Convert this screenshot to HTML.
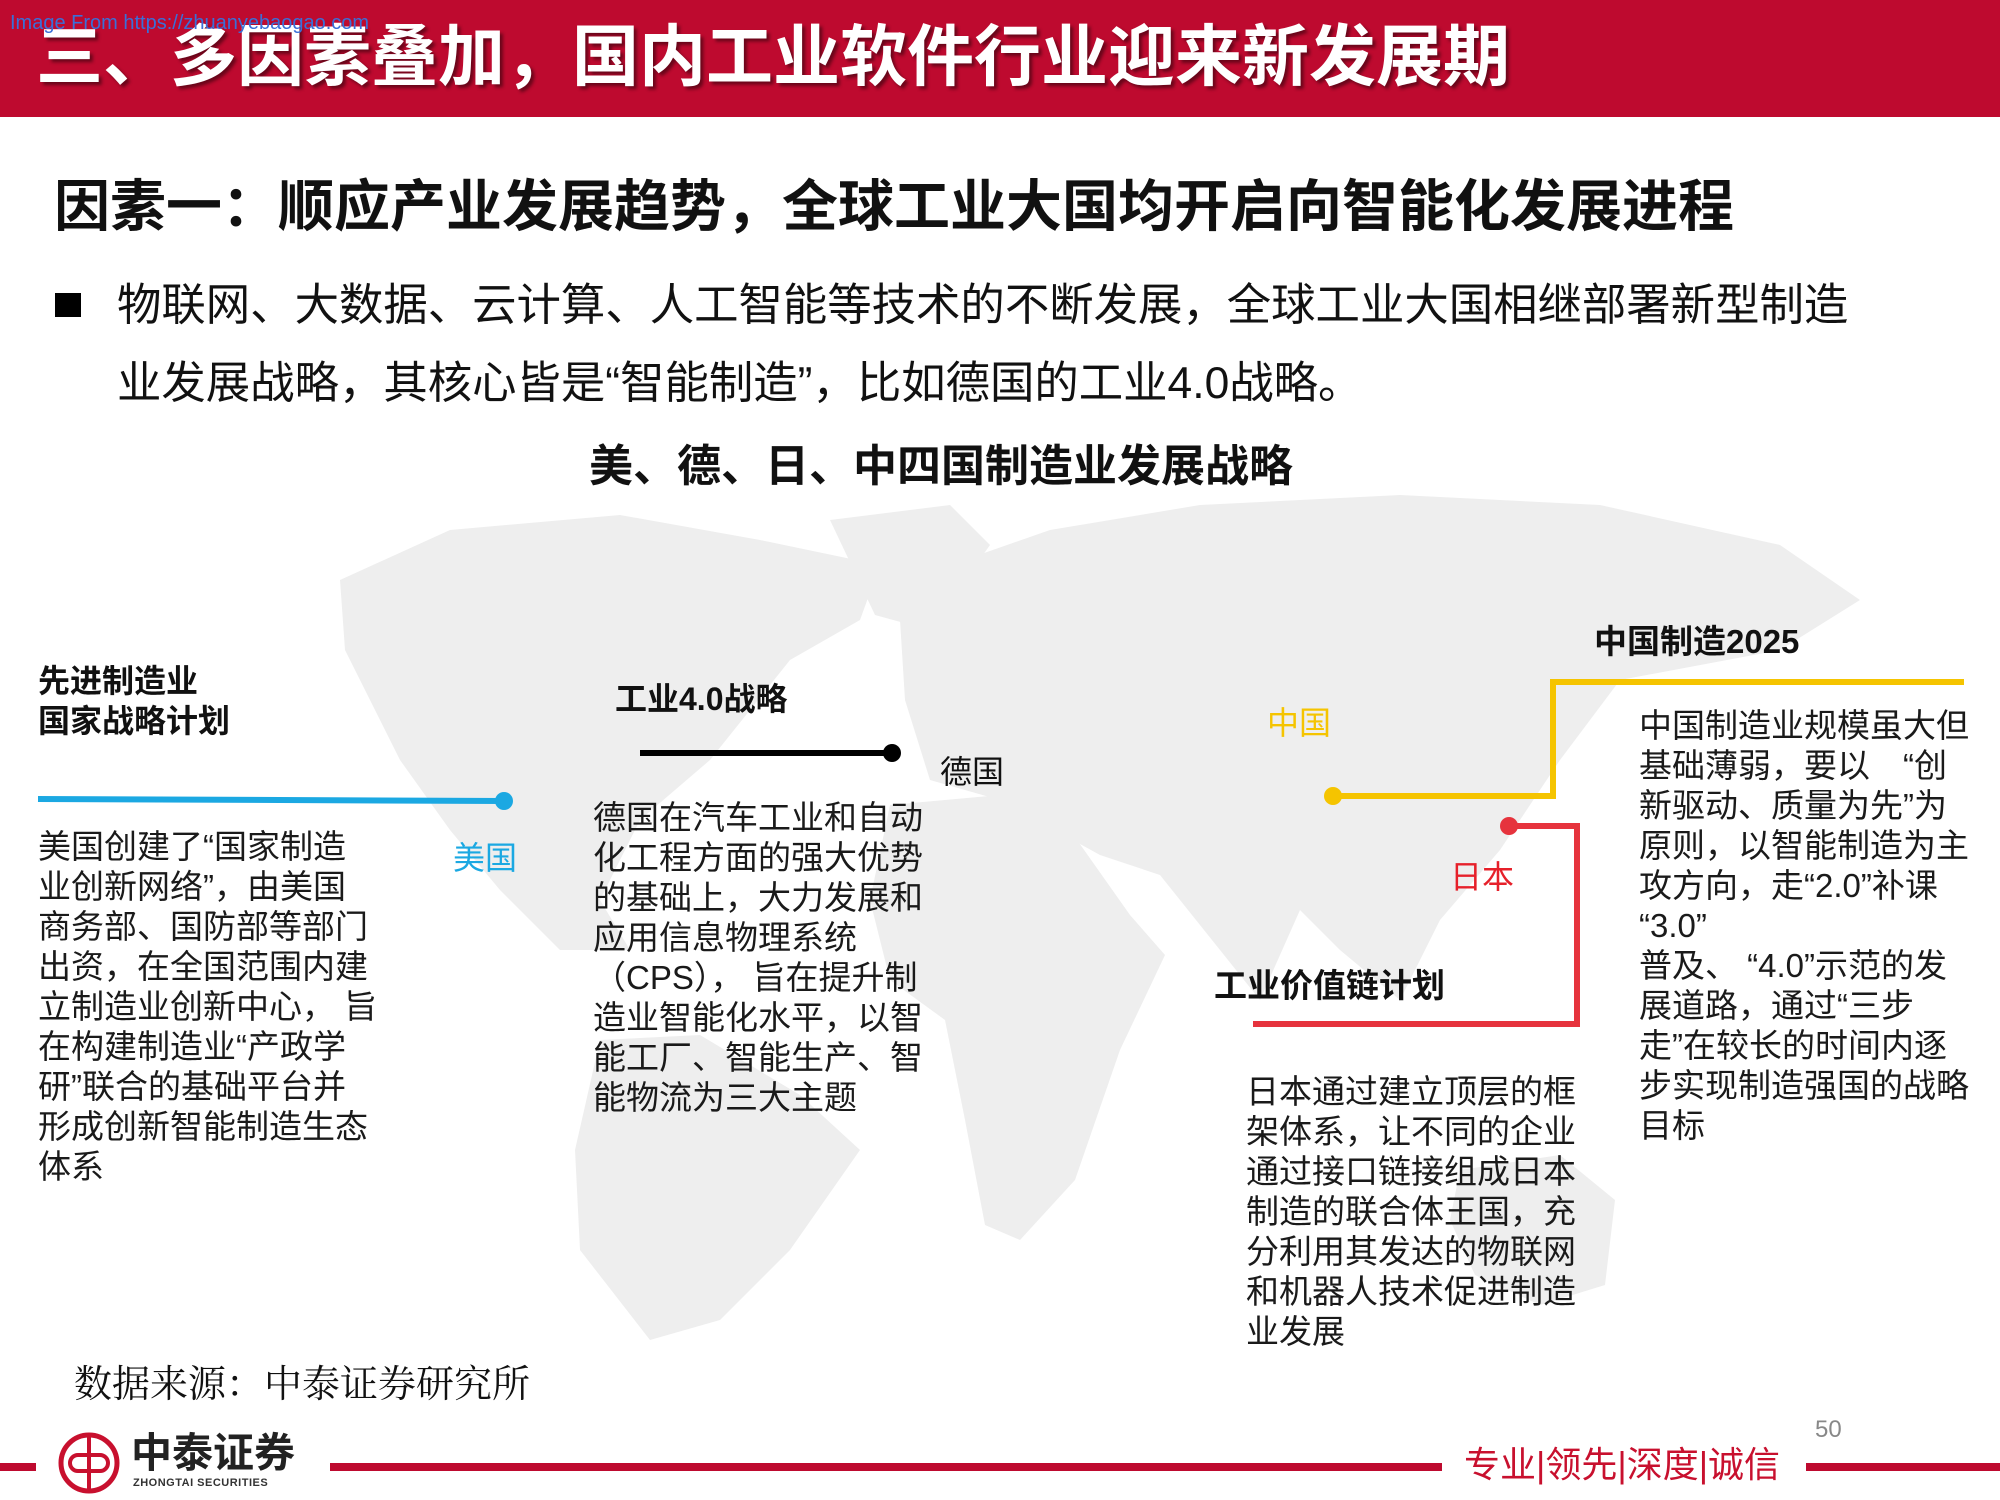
<!DOCTYPE html>
<html><head><meta charset="utf-8"><style>
*{margin:0;padding:0;box-sizing:border-box}
body{width:2000px;height:1500px;position:relative;background:#fff;overflow:hidden;font-family:"Liberation Sans","Noto Sans CJK SC",sans-serif;color:#111}
.a{position:absolute;white-space:nowrap}
.b{font-weight:bold}
.p{font-size:33px;line-height:40px;color:#1a1a1a}
</style></head><body>
<div class="a" style="left:0;top:0;width:2000px;height:117px;background:#be0a2f"></div>
<div class="a b" style="left:36px;top:17px;font-size:67px;line-height:82px;color:#fff;text-shadow:3px 3px 3px rgba(0,0,0,.45)">三、多因素叠加，国内工业软件行业迎来新发展期</div>
<div class="a" style="left:10px;top:12px;font-size:20px;color:#3a6fd8">Image From https://zhuanyebaogao.com</div>

<div class="a b" style="left:54px;top:174px;font-size:56px;line-height:66px">因素一：顺应产业发展趋势，全球工业大国均开启向智能化发展进程</div>
<div class="a" style="left:55px;top:293px;width:26px;height:24px;background:#000"></div>
<div class="a" style="left:117px;top:280px;font-size:44.4px;line-height:52px">物联网、大数据、云计算、人工智能等技术的不断发展，全球工业大国相继部署新型制造</div>
<div class="a" style="left:117px;top:358px;font-size:44.4px;line-height:52px">业发展战略，其核心皆是“智能制造”，比如德国的工业4.0战略。</div>
<div class="a b" style="left:589px;top:440px;font-size:44px;line-height:54px">美、德、日、中四国制造业发展战略</div>

<svg class="a" style="left:0;top:0" width="2000" height="1500">
<g fill="#eeeeee">
<polygon points="340,580 450,530 620,515 760,540 880,565 860,620 790,660 710,760 640,820 600,900 630,950 560,950 500,890 450,830 400,760 370,700 345,650"/>
<polygon points="830,520 950,505 990,545 930,630 875,615"/>
<polygon points="600,1040 700,1035 800,1095 860,1150 790,1250 720,1320 650,1340 580,1250 575,1150"/>
<polygon points="900,620 950,565 1050,530 1200,505 1400,495 1600,505 1780,545 1860,600 1780,650 1620,680 1560,760 1500,850 1440,920 1400,1000 1340,950 1300,910 1260,1000 1220,950 1160,875 1100,855 1000,800 930,780 905,700"/>
<polygon points="890,805 1000,795 1070,830 1130,915 1165,955 1120,1050 1075,1180 1020,1240 985,1225 965,1120 945,1020 890,980 870,900"/>
<polygon points="1460,1170 1560,1155 1615,1200 1605,1285 1540,1305 1475,1275 1450,1220"/>
</g>
<line x1="38" y1="799" x2="504" y2="801" stroke="#1ba8e2" stroke-width="6"/>
<circle cx="504" cy="801" r="9" fill="#1ba8e2"/>
<line x1="640" y1="753" x2="892" y2="753" stroke="#000" stroke-width="6"/>
<circle cx="892" cy="753" r="9" fill="#000"/>
<polyline points="1333,796 1553,796 1553,682 1964,682" fill="none" stroke="#f5c400" stroke-width="6"/>
<circle cx="1333" cy="796" r="9" fill="#f5c400"/>
<polyline points="1509,826 1577,826 1577,1024 1253,1024" fill="none" stroke="#e6333d" stroke-width="6"/>
<circle cx="1509" cy="826" r="9" fill="#e6333d"/>
<line x1="0" y1="1467" x2="36" y2="1467" stroke="#be0a2f" stroke-width="8"/>
<line x1="330" y1="1467" x2="1442" y2="1467" stroke="#be0a2f" stroke-width="8"/>
<line x1="1806" y1="1467" x2="2000" y2="1467" stroke="#be0a2f" stroke-width="8"/>
<circle cx="89" cy="1463" r="28" fill="none" stroke="#c8102e" stroke-width="5"/>
<path d="M89 1437 V1489 M78 1455 a8 8 0 1 0 0 16 h22 a8 8 0 1 0 0 -16 z" fill="none" stroke="#c8102e" stroke-width="4"/>
</svg>

<div class="a b" style="left:38px;top:662px;font-size:32px;line-height:38px">先进制造业</div>
<div class="a b" style="left:38px;top:702px;font-size:32px;line-height:38px">国家战略计划</div>
<div class="a" style="left:453px;top:838px;font-size:32px;line-height:40px;color:#1ba8e2">美国</div>
<div class="a p" style="left:38px;top:827px">美国创建了“国家制造<br>业创新网络”，由美国<br>商务部、国防部等部门<br>出资，在全国范围内建<br>立制造业创新中心， 旨<br>在构建制造业“产政学<br>研”联合的基础平台并<br>形成创新智能制造生态<br>体系</div>

<div class="a b" style="left:615px;top:680px;font-size:32px;line-height:38px">工业4.0战略</div>
<div class="a" style="left:940px;top:752px;font-size:32px;line-height:40px">德国</div>
<div class="a p" style="left:593px;top:798px">德国在汽车工业和自动<br>化工程方面的强大优势<br>的基础上，大力发展和<br>应用信息物理系统<br>（CPS）， 旨在提升制<br>造业智能化水平，以智<br>能工厂、智能生产、智<br>能物流为三大主题</div>

<div class="a" style="left:1267px;top:703px;font-size:32px;line-height:40px;color:#f5c400">中国</div>
<div class="a b" style="left:1594px;top:623px;font-size:33px;line-height:38px">中国制造2025</div>
<div class="a p" style="left:1639px;top:706px">中国制造业规模虽大但<br>基础薄弱，要以　“创<br>新驱动、质量为先”为<br>原则，以智能制造为主<br>攻方向，走“2.0”补课<br>“3.0”<br>普及、 “4.0”示范的发<br>展道路，通过“三步<br>走”在较长的时间内逐<br>步实现制造强国的战略<br>目标</div>

<div class="a" style="left:1450px;top:857px;font-size:32px;line-height:40px;color:#e6202a">日本</div>
<div class="a b" style="left:1214px;top:967px;font-size:33px;line-height:38px">工业价值链计划</div>
<div class="a p" style="left:1246px;top:1072px">日本通过建立顶层的框<br>架体系，让不同的企业<br>通过接口链接组成日本<br>制造的联合体王国，充<br>分利用其发达的物联网<br>和机器人技术促进制造<br>业发展</div>

<div class="a" style="left:74px;top:1362px;font-size:38px;line-height:46px;font-family:'Liberation Serif','Noto Serif CJK SC',serif">数据来源：中泰证券研究所</div>
<div class="a" style="left:1815px;top:1416px;font-size:24px;color:#888">50</div>
<div class="a b" style="left:131px;top:1430px;font-size:41px;line-height:46px;color:#222">中泰证券</div>
<div class="a b" style="left:133px;top:1477px;font-size:11px;color:#333;letter-spacing:0.5px">ZHONGTAI SECURITIES</div>
<div class="a" style="left:1464px;top:1443px;font-size:36px;line-height:44px;color:#c8102e">专业|领先|深度|诚信</div>
</body></html>
